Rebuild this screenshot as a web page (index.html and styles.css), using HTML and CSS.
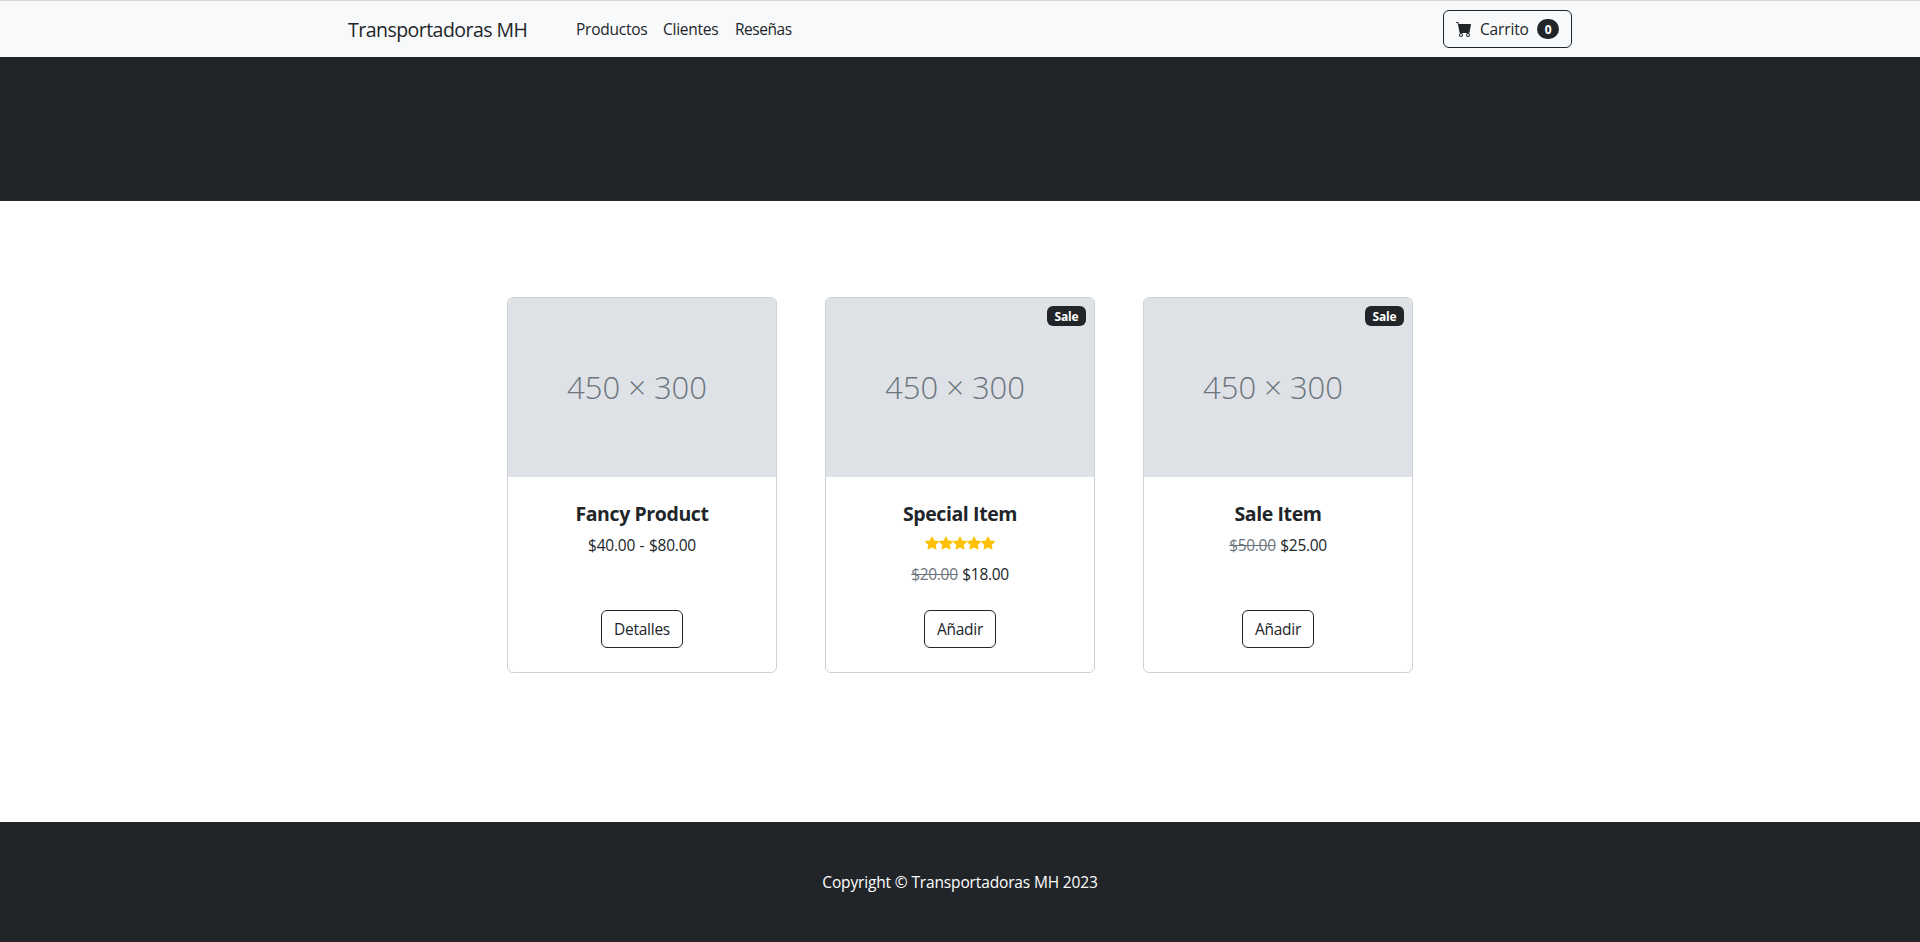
FILE: index.html
```html
<!DOCTYPE html>
<html lang="es">
<head>
<meta charset="utf-8">
<title>Transportadoras MH</title>
<link rel="stylesheet" href="styles.css">
</head>
<body>
<svg class="defs" width="0" height="0" aria-hidden="true">
  <symbol id="cart" viewBox="0 0 16 16"><path d="M0 1.5A.5.5 0 0 1 .5 1H2a.5.5 0 0 1 .485.379L2.89 3H14.5a.5.5 0 0 1 .491.592l-1.5 8A.5.5 0 0 1 13 12H4a.5.5 0 0 1-.491-.408L2.01 3.607 1.61 2H.5a.5.5 0 0 1-.5-.5zM5 12a2 2 0 1 0 0 4 2 2 0 0 0 0-4zm7 0a2 2 0 1 0 0 4 2 2 0 0 0 0-4zm-7 1a1 1 0 1 1 0 2 1 1 0 0 1 0-2zm7 0a1 1 0 1 1 0 2 1 1 0 0 1 0-2z"/></symbol>
  <symbol id="star" viewBox="0 0 16 16"><path d="M3.612 15.443c-.386.198-.824-.149-.746-.592l.83-4.73L.173 6.765c-.329-.314-.158-.888.283-.95l4.898-.696L7.538.792c.197-.39.73-.39.927 0l2.184 4.327 4.898.696c.441.062.612.636.282.95l-3.522 3.356.83 4.73c.078.443-.36.79-.746.592L8 13.187l-4.389 2.256z"/></symbol>
</svg>
<nav class="navbar">
  <div class="navbar-inner">
    <a class="brand">Transportadoras MH</a>
    <div class="nav-links"><a class="l1">Productos</a><a class="l2">Clientes</a><a class="l3">Reseñas</a></div>
    <button class="btn cart-btn"><svg class="cart-icon"><use href="#cart"/></svg><span class="cart-text">Carrito</span><span class="count">0</span></button>
  </div>
</nav>
<header class="hero"></header>
<main class="products">
  <article class="card">
    <div class="thumb"><span>450 × 300</span></div>
    <div class="card-body">
      <h5>Fancy Product</h5>
      <p class="price range">$40.00 - $80.00</p>
    </div>
    <div class="card-footer"><button class="btn details">Detalles</button></div>
  </article>
  <article class="card">
    <span class="sale">Sale</span>
    <div class="thumb"><span>450 × 300</span></div>
    <div class="card-body">
      <h5>Special Item</h5>
      <div class="stars"><svg><use href="#star"/></svg><svg><use href="#star"/></svg><svg><use href="#star"/></svg><svg><use href="#star"/></svg><svg><use href="#star"/></svg></div>
      <p class="price"><s>$20.00</s> $18.00</p>
    </div>
    <div class="card-footer"><button class="btn add">Añadir</button></div>
  </article>
  <article class="card">
    <span class="sale">Sale</span>
    <div class="thumb"><span>450 × 300</span></div>
    <div class="card-body">
      <h5>Sale Item</h5>
      <p class="price"><s>$50.00</s> $25.00</p>
    </div>
    <div class="card-footer"><button class="btn add">Añadir</button></div>
  </article>
</main>
<footer class="footer"><p>Copyright © Transportadoras MH 2023</p></footer>
</body>
</html>
```
FILE: styles.css
```css
* { box-sizing: border-box; }
body {
  margin: 0;
  height: 942px;
  display: flex;
  flex-direction: column;
  overflow: hidden;
  background: #fff;
  color: #212529;
  font: 400 15.5px/24px "Segoe UI", "Open Sans", "Noto Sans", sans-serif;
}
.defs { position: absolute; }
.navbar {
  height: 57px;
  flex: none;
  background: #f8f9fa;
  border-top: 1px solid #d5d6d8;
}
.navbar-inner {
  width: 1224px;
  height: 56px;
  margin: 0 auto;
  display: flex;
  align-items: center;
}
.brand { width: 180px; padding-top: 2px; font-size: 19.5px; line-height: 30px; white-space: nowrap; letter-spacing: -0.53px; }
.nav-links { display: flex; gap: 16px; margin-left: 48px; letter-spacing: -0.25px; white-space: nowrap; }
.l1 { width: 71px; }
.l2 { width: 56px; }
.l3 { width: 57px; letter-spacing: -0.45px; }
.btn {
  height: 38px;
  padding: 0;
  display: inline-flex;
  align-items: center;
  justify-content: center;
  border: 1px solid #212529;
  border-radius: 6px;
  background: transparent;
  color: #212529;
  font: inherit;
  letter-spacing: -0.25px;
}
.cart-btn { width: 129px; margin-left: auto; justify-content: flex-start; padding: 0 0 0 12px; }
.cart-icon { width: 16px; height: 16px; fill: currentColor; }
.cart-text { width: 49px; margin-left: 8px; text-align: left; letter-spacing: -0.15px; }
.count {
  width: 22px;
  height: 20px;
  margin-left: 8px;
  border-radius: 10px;
  background: #212529;
  color: #fff;
  font-size: 12px;
  font-weight: 700;
  line-height: 21px;
  text-align: center;
}
.hero { height: 144px; flex: none; background: #212529; }
.products {
  flex: 1;
  padding-top: 96px;
  display: flex;
  justify-content: center;
  align-items: flex-start;
  gap: 48px;
}
.card {
  position: relative;
  width: 270px;
  height: 376px;
  display: flex;
  flex-direction: column;
  border: 1px solid #d0d1d2;
  border-radius: 6px;
  text-align: center;
}
.thumb {
  height: 179px;
  display: flex;
  align-items: center;
  justify-content: center;
  padding: 0 10px 2px 0;
  border-radius: 5px 5px 0 0;
  background: #dee2e6;
  color: #6c757d;
  font: 300 31px/40px "Open Sans", sans-serif;
  white-space: nowrap;
}
.sale {
  position: absolute;
  top: 8px;
  right: 8px;
  width: 39px;
  height: 20px;
  border-radius: 6px;
  background: #212529;
  color: #fff;
  font-size: 12px;
  font-weight: 700;
  line-height: 21px;
  letter-spacing: -0.2px;
}
.card-body { flex: 1; padding-top: 25px; }
h5 { margin: 0 0 7px; font-size: 19.5px; line-height: 24px; font-weight: 700; letter-spacing: -0.4px; }
.price { margin: 0; letter-spacing: -0.3px; word-spacing: 0.8px; }
.range { letter-spacing: -0.23px; }
s { color: #6c757d; }
.stars { display: flex; justify-content: center; height: 21px; margin-bottom: 8px; padding-top: 3px; color: #ffc107; }
.stars svg { width: 14px; height: 14px; fill: currentColor; }
.card-footer { padding-bottom: 24px; display: flex; justify-content: center; }
.details { width: 82px; }
.add { width: 72px; }
.footer {
  height: 120px;
  flex: none;
  padding-top: 48px;
  background: #212529;
  border-bottom: 1px solid #2b1f29;
  color: #fff;
  text-align: center;
}
.footer p { margin: 0; letter-spacing: -0.15px; }
```
